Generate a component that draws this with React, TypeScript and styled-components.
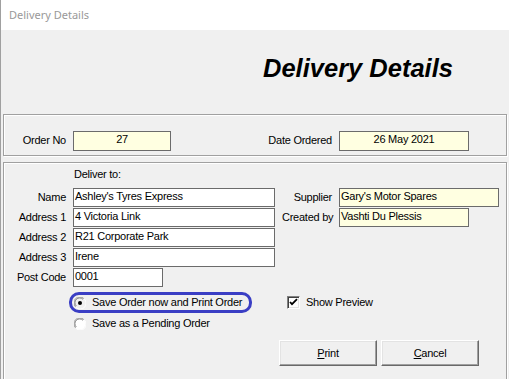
import React from "react";
import styled, { createGlobalStyle } from "styled-components";

const GlobalStyle = createGlobalStyle`
  html, body {
    margin: 0;
    padding: 0;
    background: #f0f0f0;
  }
  * {
    box-sizing: border-box;
  }
`;

const Window = styled.div`
  width: 509px;
  height: 379px;
  overflow: hidden;
  border-left: 1px solid #a0a0a0;
  background: #f0f0f0;
  font-family: "Liberation Sans", Arial, sans-serif;
  font-size: 11px;
  letter-spacing: -0.25px;
  color: #000;
  display: flex;
  flex-direction: column;
`;

const TitleBar = styled.div`
  height: 30px;
  flex: none;
  background: #fff;
  padding-left: 8px;
  font-family: "Noto Sans", "Open Sans", sans-serif;
  font-size: 11px;
  letter-spacing: 0;
  line-height: 30px;
  color: #999;
`;

const Body = styled.div`
  flex: 1;
  display: flex;
  flex-direction: column;
  min-height: 0;
`;

const Heading = styled.h1`
  margin: 23px 0 31px 262px;
  font-family: "Liberation Sans", Arial, sans-serif;
  font-size: 25.5px;
  line-height: 30px;
  font-weight: bold;
  font-style: italic;
  letter-spacing: 0;
  color: #000;
`;

// etched group box
const Panel = styled.div`
  margin: 0 2px;
  flex: none;
  border: 1px solid #a0a0a0;
  box-shadow: inset 1px 1px 0 #fff, 1px 1px 0 #fff;
`;

const OrderPanel = styled(Panel)`
  height: 42px;
  padding-top: 11px;
  display: grid;
  grid-template-columns: 62px 98px 154px 130px;
  column-gap: 7px;
  align-items: center;
`;

const MainPanel = styled(Panel)`
  margin-top: 6px;
  height: 240px;
  padding-top: 5px;
  display: flex;
  flex-direction: column;
`;

const Caption = styled.div`
  margin-left: 70px;
  line-height: 13px;
  height: 13px;
`;

const FormGrid = styled.div`
  margin-top: 7px;
  display: grid;
  grid-template-columns: 62px 202px 50px 160px;
  grid-auto-rows: 19px;
  column-gap: 7px;
  row-gap: 1px;
  align-items: center;
`;

const Label = styled.label`
  text-align: right;
  white-space: nowrap;
  line-height: 13px;
`;

const Field = styled.div<{ $width?: number; $tint?: boolean; $center?: boolean; $height?: number }>`
  width: ${({ $width }) => ($width ? `${$width}px` : "100%")};
  height: ${({ $height }) => $height || 19}px;
  background: ${({ $tint }) => ($tint ? "#ffffe1" : "#fff")};
  border: 1px solid #6b6b6b;
  padding: 1px 1px 0;
  line-height: 13px;
  white-space: nowrap;
  overflow: hidden;
  text-align: ${({ $center }) => ($center ? "center" : "left")};
`;

const OptionsRow = styled.div`
  margin-top: 5px;
  margin-left: 65px;
  display: flex;
  align-items: flex-start;
`;

const RadioGroup = styled.div`
  display: flex;
  flex-direction: column;
`;

const RadioOption = styled.div<{ $focused?: boolean }>`
  width: 183px;
  height: 21px;
  border: 3px solid ${({ $focused }) => ($focused ? "#3a3ec4" : "transparent")};
  border-radius: 10px;
  padding-left: 2px;
  display: flex;
  align-items: center;
  gap: 6px;
  line-height: 13px;
  white-space: nowrap;
`;

const CheckOption = styled.div`
  margin-left: 35px;
  height: 21px;
  display: flex;
  align-items: center;
  gap: 6px;
  line-height: 13px;
`;

const CheckBox = styled.span`
  width: 13px;
  height: 13px;
  background: #fff;
  border: 1px solid;
  border-color: #808080 #fff #fff #808080;
  box-shadow: inset 1px 1px 0 #404040, inset -1px -1px 0 #e3e3e3;
  display: flex;
  align-items: center;
  justify-content: center;
`;

const ButtonRow = styled.div`
  margin-top: 6px;
  padding-left: 275px;
  display: flex;
  gap: 4px;
`;

const ClassicButton = styled.button`
  width: 98px;
  height: 26px;
  padding: 0;
  background: #f0f0f0;
  border: 1px solid;
  border-color: #fff #696969 #696969 #fff;
  box-shadow: inset -1px -1px 0 #a0a0a0, inset 1px 1px 0 #e3e3e3;
  font-family: "Liberation Sans", Arial, sans-serif;
  font-size: 11px;
  letter-spacing: -0.25px;
  color: #000;
  u {
    text-decoration: underline;
  }
`;

function Radio({ checked }: { checked?: boolean }) {
  return (
    <svg width="12" height="12" viewBox="0 0 12 12">
      <circle cx="6" cy="6" r="5.5" fill={checked ? "#f0f0f0" : "#fff"} />
      <path d="M1.6 9.9 A5.5 5.5 0 0 1 9.9 1.6" stroke="#a0a0a0" fill="none" />
      <path d="M2.3 9.0 A4.5 4.5 0 0 1 9.0 2.3" stroke="#696969" fill="none" strokeWidth="0.8" />
      <path d="M10.4 2.1 A5.5 5.5 0 0 1 2.1 10.4" stroke="#ffffff" fill="none" />
      {checked ? <circle cx="6" cy="6" r="2" fill="#000" /> : null}
    </svg>
  );
}

export default function App() {
  return (
    <>
      <GlobalStyle />
      <Window>
        <TitleBar>Delivery Details</TitleBar>
        <Body>
          <Heading>Delivery Details</Heading>

          <OrderPanel>
            <Label>Order No</Label>
            <Field $tint $center $height={20}>27</Field>
            <Label>Date Ordered</Label>
            <Field $tint $center $height={20}>26 May 2021</Field>
          </OrderPanel>

          <MainPanel>
            <Caption>Deliver to:</Caption>
            <FormGrid>
              <Label>Name</Label>
              <Field>Ashley's Tyres Express</Field>
              <Label>Supplier</Label>
              <Field $tint>Gary's Motor Spares</Field>

              <Label>Address 1</Label>
              <Field>4 Victoria Link</Field>
              <Label>Created by</Label>
              <Field $tint $width={130}>Vashti Du Plessis</Field>

              <Label>Address 2</Label>
              <Field>R21 Corporate Park</Field>
              <span />
              <span />

              <Label>Address 3</Label>
              <Field>Irene</Field>
              <span />
              <span />

              <Label>Post Code</Label>
              <Field $width={90}>0001</Field>
            </FormGrid>

            <OptionsRow>
              <RadioGroup>
                <RadioOption $focused>
                  <Radio checked />
                  Save Order now and Print Order
                </RadioOption>
                <RadioOption>
                  <Radio />
                  Save as a Pending Order
                </RadioOption>
              </RadioGroup>
              <CheckOption>
                <CheckBox>
                  <svg width="9" height="9" viewBox="0 0 9 9">
                    <path d="M1 4 L3 6.2 L8 1.2" stroke="#000" strokeWidth="1.8" fill="none" />
                  </svg>
                </CheckBox>
                Show Preview
              </CheckOption>
            </OptionsRow>

            <ButtonRow>
              <ClassicButton>
                <u>P</u>rint
              </ClassicButton>
              <ClassicButton>
                <u>C</u>ancel
              </ClassicButton>
            </ButtonRow>
          </MainPanel>
        </Body>
      </Window>
    </>
  );
}
